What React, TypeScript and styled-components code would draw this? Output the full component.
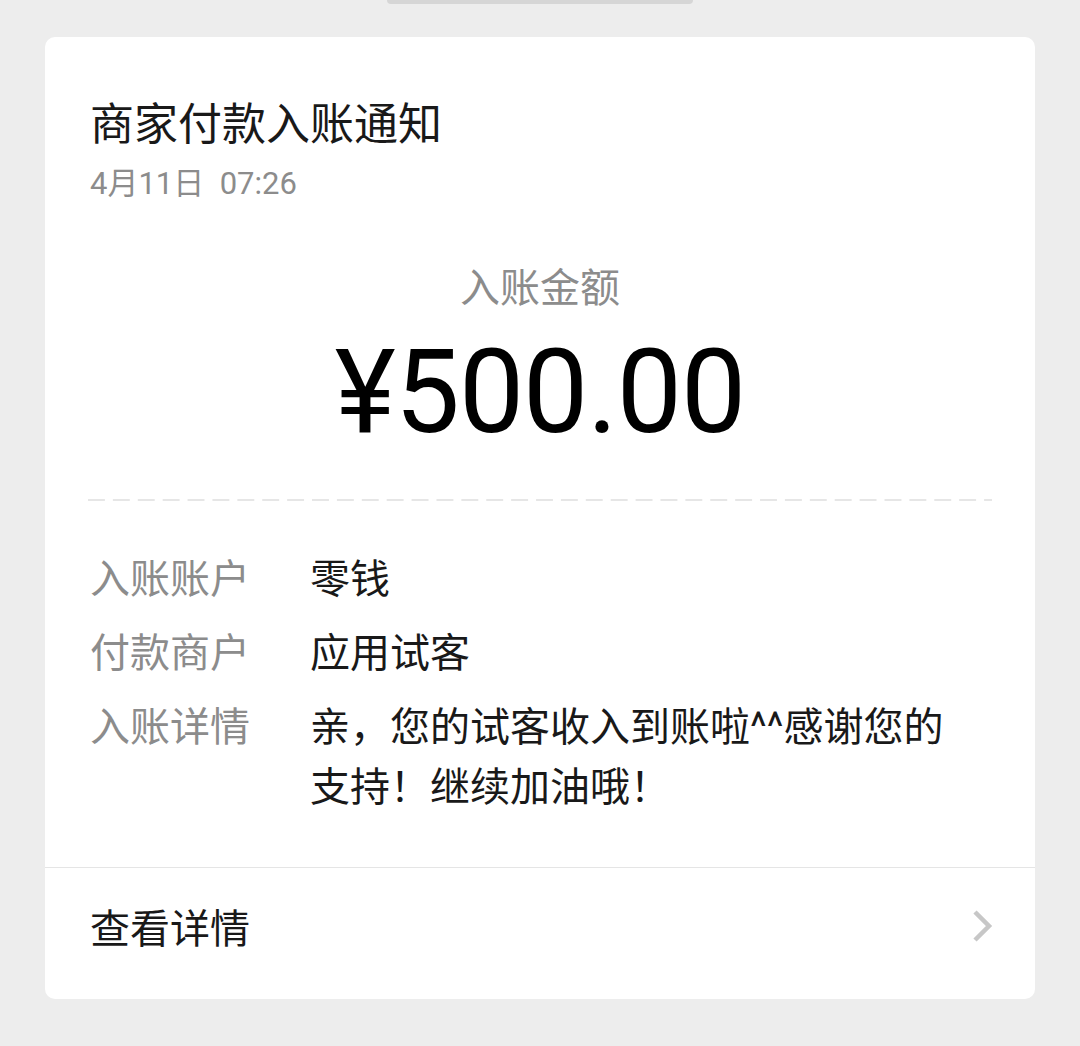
import React from "react"
import styled, { createGlobalStyle } from "styled-components"

const GlobalStyle = createGlobalStyle`
  html, body {
    margin: 0;
    padding: 0;
    background: #ededed;
  }
  body {
    font-family: Roboto, "Noto Sans CJK SC", sans-serif;
    -webkit-font-smoothing: antialiased;
  }
`

const Page = styled.div`
  width: 1080px;
  min-height: 1046px;
  display: flex;
  flex-direction: column;
  align-items: center;
`

const Handle = styled.div`
  width: 306px;
  height: 4px;
  background: #d6d6d6;
  border-radius: 0 0 4px 4px;
`

const Card = styled.section`
  width: 990px;
  margin-top: 33px;
  background: #fff;
  border-radius: 10px;
  overflow: hidden;
`

const Body = styled.div`
  padding: 58px 45px 49px 45px;
`

const Title = styled.h1`
  margin: 0;
  font-size: 44px;
  line-height: 60px;
  font-weight: 400;
  color: #191919;
`

const DateLine = styled.div`
  font-size: 31px;
  line-height: 58px;
  color: #8c8c8c;
  white-space: pre;
`

const AmountLabel = styled.div`
  margin-top: 48px;
  text-align: center;
  font-size: 40px;
  line-height: 56px;
  color: #8c8c8c;
`

const Amount = styled.div`
  margin-top: 5px;
  text-align: center;
  font-size: 116px;
  line-height: 140px;
  color: #000;
  letter-spacing: -1px;
`

const Dashed = styled.div`
  margin: 37px -2px 0 -2px;
  height: 2px;
  background-image: linear-gradient(to right, #e6e6e6 0, #e6e6e6 17px, transparent 17px);
  background-size: 24.9px 2px;
  background-repeat: repeat-x;
`

const Rows = styled.div`
  margin-top: 49px;
  display: flex;
  flex-direction: column;
  gap: 14px;
`

const Row = styled.div`
  display: grid;
  grid-template-columns: 220px 665px;
  font-size: 40px;
  line-height: 60px;
`

const Label = styled.div`
  color: #8c8c8c;
`

const Value = styled.div`
  color: #191919;
  word-break: break-all;
`

const LinkRow = styled.div`
  height: 132px;
  box-sizing: border-box;
  border-top: 1px solid #e5e5e5;
  display: flex;
  align-items: center;
  justify-content: space-between;
  padding: 0 40px 16px 45px;
  font-size: 40px;
  color: #191919;
`

const Chevron = () => (
  <svg width="24" height="34" viewBox="0 0 24 34">
    <path d="M4 3 L18 17 L4 31" fill="none" stroke="#c7c7c7" strokeWidth="4.5" />
  </svg>
)

const rows = [
  { label: "入账账户", value: "零钱" },
  { label: "付款商户", value: "应用试客" },
  { label: "入账详情", value: "亲，您的试客收入到账啦^^感谢您的支持！继续加油哦！" },
]

const App: React.FC = () => (
  <Page>
    <GlobalStyle />
    <Handle />
    <Card>
      <Body>
        <Title>商家付款入账通知</Title>
        <DateLine>4月11日  07:26</DateLine>
        <AmountLabel>入账金额</AmountLabel>
        <Amount>¥500.00</Amount>
        <Dashed />
        <Rows>
          {rows.map((r) => (
            <Row key={r.label}>
              <Label>{r.label}</Label>
              <Value>{r.value}</Value>
            </Row>
          ))}
        </Rows>
      </Body>
      <LinkRow>
        <span>查看详情</span>
        <Chevron />
      </LinkRow>
    </Card>
  </Page>
)

export default App
